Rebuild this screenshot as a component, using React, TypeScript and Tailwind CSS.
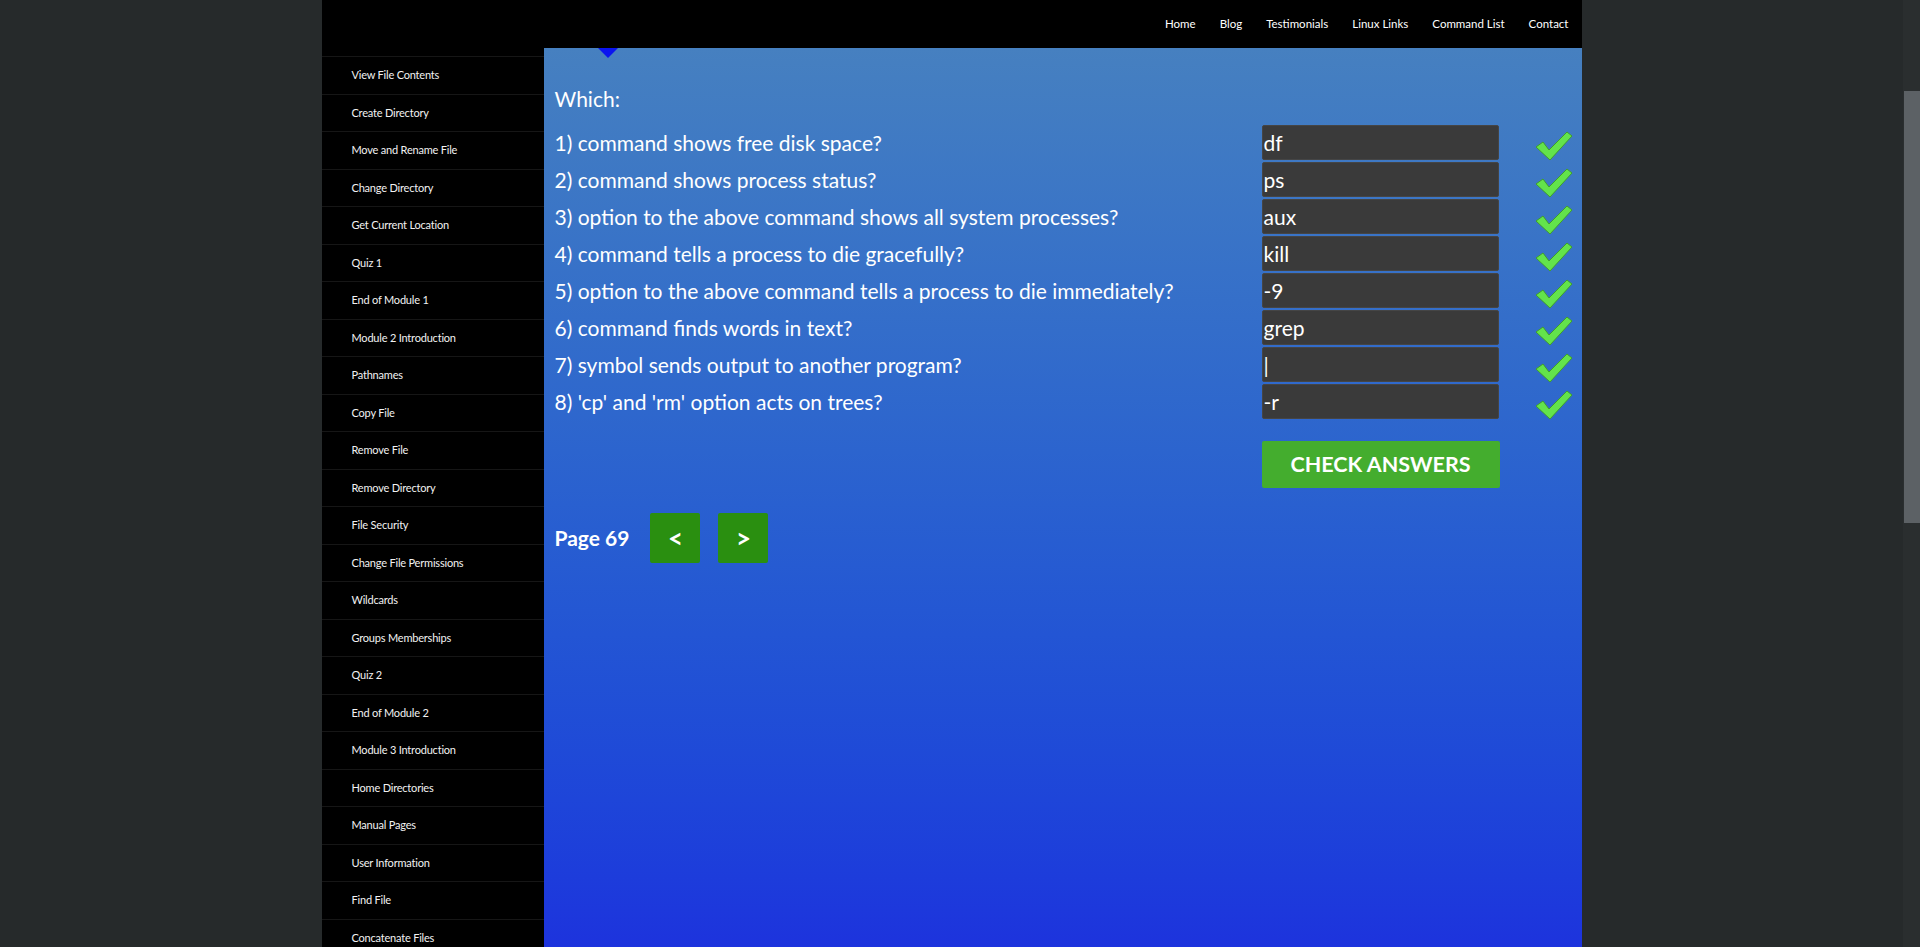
import React from "react";

const lessons = [
  "View File Contents",
  "Create Directory",
  "Move and Rename File",
  "Change Directory",
  "Get Current Location",
  "Quiz 1",
  "End of Module 1",
  "Module 2 Introduction",
  "Pathnames",
  "Copy File",
  "Remove File",
  "Remove Directory",
  "File Security",
  "Change File Permissions",
  "Wildcards",
  "Groups Memberships",
  "Quiz 2",
  "End of Module 2",
  "Module 3 Introduction",
  "Home Directories",
  "Manual Pages",
  "User Information",
  "Find File",
  "Concatenate Files",
];

const questions = [
  { q: "1) command shows free disk space?", a: "df" },
  { q: "2) command shows process status?", a: "ps" },
  { q: "3) option to the above command shows all system processes?", a: "aux" },
  { q: "4) command tells a process to die gracefully?", a: "kill" },
  { q: "5) option to the above command tells a process to die immediately?", a: "-9" },
  { q: "6) command finds words in text?", a: "grep" },
  { q: "7) symbol sends output to another program?", a: "|" },
  { q: "8) 'cp' and 'rm' option acts on trees?", a: "-r" },
];

const navLinks = ["Home", "Blog", "Testimonials", "Linux Links", "Command List", "Contact"];

const Tick = () => (
  <svg width="38" height="30" viewBox="0 0 38 30">
    <path
      d="M1 16 L8 11 L14 19 L32 1 L37 5 L15 29 Z"
      fill="#63e34b"
      stroke="#3f9e2c"
      strokeWidth="1"
      strokeLinejoin="round"
    />
  </svg>
);

export default function App() {
  return (
    <div
      className="flex h-[947px] w-full overflow-hidden bg-[#262a2b]"
      style={{ fontFamily: "Lato, 'Open Sans', sans-serif" }}
    >
      <div className="flex flex-1 justify-center">
        <div className="flex w-[1260px] flex-col">
          <header className="flex h-[48px] shrink-0 items-center justify-end gap-[24px] bg-black pr-[13px] text-[11.5px] text-white">
            {navLinks.map((l) => (
              <span key={l}>{l}</span>
            ))}
          </header>
          <div className="flex min-h-0 flex-1">
            <aside className="flex w-[222px] flex-col overflow-hidden bg-black">
              <div className="h-[8px] shrink-0" />
              {lessons.map((l) => (
                <div
                  key={l}
                  className="flex h-[37.5px] shrink-0 items-center border-t border-[#161616] pl-[30px] text-[11px] tracking-[-0.2px] text-[#f2f2f2]"
                >
                  {l}
                </div>
              ))}
            </aside>
            <main className="relative flex-1 bg-gradient-to-b from-[#4680c0] to-[#1d33dd] pl-[11px] pt-[39px] text-white">
              <div className="absolute left-[54px] top-0 h-0 w-0 border-l-[10px] border-r-[10px] border-t-[10px] border-l-transparent border-r-transparent border-t-[#0a14f0]" />
              <div className="mb-[14px] text-[21px] leading-[24px]">Which:</div>
              <div className="flex flex-col">
                {questions.map((item) => (
                  <div key={item.q} className="mb-[2px] flex h-[35px] items-center">
                    <div className="flex-1 text-[21px]">{item.q}</div>
                    <div className="flex h-[35px] w-[237px] items-center rounded-[2px] border border-[#454545] bg-[#3a3a3a] pl-[1px] text-[21px] text-white">
                      {item.a}
                    </div>
                    <div className="ml-[36px] mt-[6px] flex w-[47px]">
                      <Tick />
                    </div>
                  </div>
                ))}
              </div>
              <div className="mt-[20px] flex">
                <div className="flex-1" />
                <button className="flex h-[47px] w-[238px] items-center justify-center rounded-[2px] bg-[#44ad2e] text-[21.5px] font-bold text-white">
                  CHECK ANSWERS
                </button>
                <div className="w-[82px]" />
              </div>
              <div className="mt-[25px] flex items-center">
                <span className="mr-[21px] text-[21px] font-bold">Page 69</span>
                <button className="mr-[18px] flex h-[50px] w-[50px] items-center justify-center rounded-[2px] bg-[#2a8f10] text-[26px] font-bold">
                  &lt;
                </button>
                <button className="flex h-[50px] w-[50px] items-center justify-center rounded-[2px] bg-[#2a8f10] text-[26px] font-bold">
                  &gt;
                </button>
              </div>
            </main>
          </div>
        </div>
      </div>
      <div className="flex w-[17px] flex-col bg-[#2a2e2f] pt-[91px]">
        <div className="ml-[1px] h-[432px] bg-[#5c6165]" />
      </div>
    </div>
  );
}
